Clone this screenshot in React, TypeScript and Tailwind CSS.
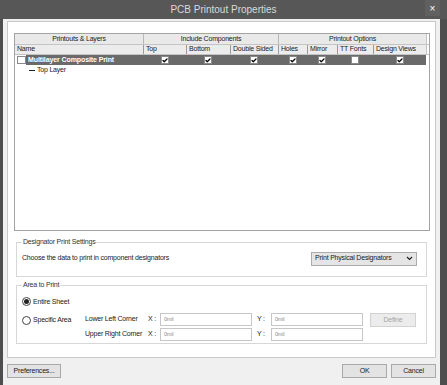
import { Check } from "lucide-react";

/* ========== 表格列定义 ========== */

const COLUMNS = [
  { key: "name", label: "Name", w: 128 },
  { key: "top", label: "Top", w: 43 },
  { key: "bottom", label: "Bottom", w: 44 },
  { key: "double", label: "Double Sided", w: 48 },
  { key: "holes", label: "Holes", w: 29 },
  { key: "mirror", label: "Mirror", w: 30 },
  { key: "tt", label: "TT Fonts", w: 36 },
  { key: "views", label: "Design Views", w: 53 },
];

const GROUPS = [
  { label: "Printouts & Layers", w: 128 },
  { label: "Include Components", w: 135 },
  { label: "Printout Options", w: 148 },
];

const CHECKS: Record<string, boolean> = {
  top: true,
  bottom: true,
  double: true,
  holes: true,
  mirror: true,
  tt: false,
  views: true,
};

/* ========== 小部件 ========== */

function CheckBox({ checked }: { checked: boolean }) {
  return (
    <span className="flex h-[8px] w-[8px] items-center justify-center border border-[#8a8a8a] bg-white">
      {checked && <Check className="h-[7px] w-[7px] text-black" strokeWidth={5} />}
    </span>
  );
}

function Radio({ checked, label }: { checked: boolean; label: string }) {
  return (
    <span className="flex items-center gap-[2px] whitespace-nowrap">
      <span className="flex h-[9px] w-[9px] items-center justify-center rounded-full border border-[#444] bg-white">
        {checked && <span className="h-[5px] w-[5px] rounded-full bg-[#222]" />}
      </span>
      <span>{label}</span>
    </span>
  );
}

function Input() {
  return (
    <div className="flex h-[13px] w-[92px] items-center border border-[#c6c6c6] bg-white pl-[3px] text-[5.5px] text-[#8a8a8a]">
      0mil
    </div>
  );
}

function Button({ label, w, disabled }: { label: string; w: number; disabled?: boolean }) {
  return (
    <button
      className={`flex h-[14px] items-center justify-center whitespace-nowrap border ${
        disabled ? "border-[#d2d2d2] bg-[#ececec] text-[#a6a6a6]" : "border-[#a9a9a9] bg-[#e3e3e3] text-[#1a1a1a]"
      }`}
      style={{ width: w }}
    >
      {label}
    </button>
  );
}

/* ========== 打印层表格 ========== */

function LayerTable() {
  return (
    <div className="h-[198px] w-[416px] border border-[#a3a3a3] bg-white">
      <div className="flex h-[11px] border-b border-[#c4c4c4] bg-[#e9e9e9]">
        {GROUPS.map((g, i) => (
          <div
            key={g.label}
            className={`flex items-center justify-center whitespace-nowrap ${i > 0 ? "border-l border-[#b8b8b8]" : ""}`}
            style={{ width: g.w }}
          >
            {g.label}
          </div>
        ))}
        <div className="flex-1 border-l border-[#c4c4c4] bg-white" />
      </div>
      <div className="flex h-[10px] border-b border-[#c4c4c4] bg-[#ececec]">
        {COLUMNS.map((c, i) => (
          <div
            key={c.key}
            className={`flex items-center whitespace-nowrap pl-[2px] ${i > 0 ? "border-l border-[#9a9a9a]" : ""}`}
            style={{ width: c.w }}
          >
            {c.label}
          </div>
        ))}
        <div className="flex-1 border-l border-[#c4c4c4] bg-white" />
      </div>
      <div className="flex h-[10px] items-center">
        <div className="flex items-center" style={{ width: 128 }}>
          <span className="ml-[2px] h-[8px] w-[9px] border border-[#8a8a8a] bg-white" />
          <span className="flex h-[10px] flex-1 items-center whitespace-nowrap bg-[#6a6a6a] pl-[2px] font-bold tracking-[-0.1px] text-white">
            Multilayer Composite Print
          </span>
        </div>
        {COLUMNS.slice(1).map((c) => (
          <div key={c.key} className="flex h-[10px] items-center justify-center bg-[#6a6a6a]" style={{ width: c.w }}>
            <CheckBox checked={CHECKS[c.key]} />
          </div>
        ))}
      </div>
      <div className="flex h-[11px] items-center pl-[14px]">
        <span className="mr-[2px] h-[1px] w-[6px] bg-[#222]" />
        <span>Top Layer</span>
      </div>
    </div>
  );
}

/* ========== 主入口 ========== */

export default function App() {
  return (
    <div className="flex h-[385px] w-[447px] flex-col bg-[#4e4e4e] font-['Liberation_Sans',Arial,sans-serif] text-[7px] tracking-[-0.2px] text-[#1a1a1a]">
      {/* 标题栏 */}
      <div className="relative flex h-[19px] items-center justify-center bg-[#575757] text-[10px] tracking-normal text-[#d9d9d9]">
        PCB Printout Properties
        <span className="absolute right-[7px] top-0 flex h-[16px] w-[15px] items-center justify-center bg-[#606060] text-[10px] text-white">
          ×
        </span>
      </div>

      <div className="ml-[3px] mr-[7px] flex flex-1 flex-col bg-[#f0f0f0] px-[4px] pt-[2px]">
        <div className="flex h-[337px] flex-col border border-[#c9c9c9] bg-white pl-[6px] pt-[11px]">
          <LayerTable />

          {/* 位号打印设置 */}
          <fieldset className="ml-[2px] mt-[6px] h-[40px] w-[411px] border border-[#d7d7d7] px-[5px]">
            <legend className="px-[1px] text-[#333]">Designator Print Settings</legend>
            <div className="flex items-center justify-between pr-[4px] pt-[4px]">
              <span>Choose the data to print in component designators</span>
              <div className="flex h-[14px] w-[106px] items-center justify-between whitespace-nowrap border border-[#ababab] bg-[#e5e5e5] px-[3px]">
                <span>Print Physical Designators</span>
                <svg width="7" height="5" viewBox="0 0 7 5">
                  <path d="M1 1 L3.5 3.5 L6 1" fill="none" stroke="#222" strokeWidth="1.2" />
                </svg>
              </div>
            </div>
          </fieldset>

          {/* 打印区域 */}
          <fieldset className="ml-[2px] mt-[3px] h-[64px] w-[411px] border border-[#d7d7d7] px-[5px]">
            <legend className="px-[1px] text-[#333]">Area to Print</legend>
            <div className="pt-[6px]">
              <Radio checked label="Entire Sheet" />
            </div>
            <div className="mt-[6px] flex">
              <div className="w-[63px] pt-[2px]">
                <Radio checked={false} label="Specific Area" />
              </div>
              <div className="flex flex-col gap-[2px]">
                {["Lower Left Corner", "Upper Right Corner"].map((label) => (
                  <div key={label} className="flex items-center whitespace-nowrap">
                    <span className="w-[63px]">{label}</span>
                    <span className="w-[12px]">X :</span>
                    <Input />
                    <span className="ml-[5px] w-[14px]">Y :</span>
                    <Input />
                  </div>
                ))}
              </div>
              <div className="ml-[7px]">
                <Button label="Define" w={46} disabled />
              </div>
            </div>
          </fieldset>
        </div>

        {/* 底部按钮 */}
        <div className="mt-[6px] flex items-center">
          <Button label="Preferences..." w={54} />
          <div className="ml-auto flex gap-[4px]">
            <Button label="OK" w={45} />
            <Button label="Cancel" w={45} />
          </div>
        </div>
      </div>
    </div>
  );
}
